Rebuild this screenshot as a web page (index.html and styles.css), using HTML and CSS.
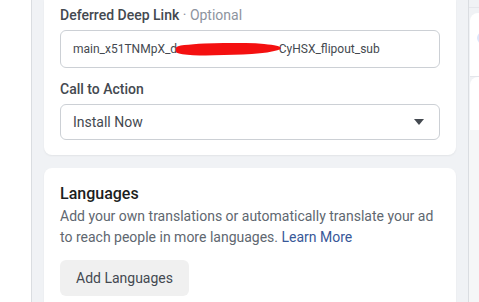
FILE: index.html
```html
<!DOCTYPE html>
<html lang="en">
<head>
<meta charset="UTF-8" />
<meta name="viewport" content="width=device-width, initial-scale=1" />
<title>Ad setup</title>
<link rel="stylesheet" href="styles.css">
</head>
<body>

<div class="page">
  <div class="left-nav"></div>

  <div class="main">
    <div class="card card-cut">
      <label class="field-label">Deferred Deep Link <span class="optional">· Optional</span></label>
      <div class="text-input">
        main_x51TNMpX_d<span class="redact">xxxxxxxxxxxxxxxx</span>CyHSX_flipout_sub
      </div>

      <label class="field-label field-gap">Call to Action</label>
      <div class="select">
        <span>Install Now</span>
        <span class="caret"></span>
      </div>
    </div>

    <div class="card">
      <h2>Languages</h2>
      <p class="desc">Add your own translations or automatically translate your ad to reach people in more languages. <a href="#">Learn More</a></p>
      <button class="btn">Add Languages</button>
    </div>
  </div>

  <div class="side">
    <div class="side-top"></div>
    <div class="side-card">
      <span class="dot"></span>
    </div>
    <div class="side-card side-card-2"></div>
    <div class="side-rest"></div>
  </div>
</div>

</body>
</html>
```

FILE: styles.css
```css
  body {
    margin: 0;
    padding: 0;
    overflow: hidden;
    background-color: #fff;
    font-family: Roboto, "Liberation Sans", Arial, sans-serif;
    color: #1c1e21;
  }
  .page {
    display: flex;
    height: 302px;
  }
  .left-nav {
    width: 31px;
    flex: none;
    background-color: #fff;
    border-right: 1px solid #dadde1;
  }
  .main {
    width: 412px;
    flex: none;
    background-color: #f0f2f5;
    padding: 0 12px;
    display: flex;
    flex-direction: column;
    gap: 13px;
  }
  .card {
    background-color: #fff;
    border-radius: 8px;
    padding: 16px 16px 16px 16px;
    box-shadow: 0 1px 2px rgba(0,0,0,0.06);
  }
  .card-cut {
    border-radius: 0 0 8px 8px;
    padding-top: 6px;
    padding-bottom: 15px;
  }
  .field-label {
    display: block;
    font-size: 14px;
    line-height: 18px;
    font-weight: 500;
    color: #444950;
    margin-bottom: 6px;
  }
  .field-gap {
    margin-top: 12px;
  }
  .optional {
    font-weight: 400;
    color: #8d949e;
  }
  .text-input {
    height: 38px;
    box-sizing: border-box;
    border: 1px solid #ccd0d5;
    border-radius: 6px;
    padding: 0 12px;
    display: flex;
    align-items: center;
    font-size: 12px;
    color: #444950;
    white-space: nowrap;
  }
  .redact {
    position: relative;
    color: transparent;
    letter-spacing: 0.4px;
  }
  .redact::after {
    content: '';
    position: absolute;
    left: -1px;
    right: -2px;
    top: 1px;
    height: 12px;
    background: #f41010;
    border-radius: 30% 60% 50% 40%;
    transform: rotate(-1.5deg);
  }
  .select {
    height: 36px;
    box-sizing: border-box;
    border: 1px solid #ccd0d5;
    border-radius: 6px;
    padding: 0 15px 0 12px;
    display: flex;
    align-items: center;
    justify-content: space-between;
    font-size: 14px;
    color: #444950;
  }
  .caret {
    width: 0;
    height: 0;
    border-left: 5px solid transparent;
    border-right: 5px solid transparent;
    border-top: 6px solid #444950;
  }
  .card h2 {
    margin: 0 0 2px 0;
    font-size: 16px;
    line-height: 20px;
    font-weight: 500;
    color: #1c1e21;
  }
  .desc {
    margin: 0 0 12px 0;
    font-size: 14px;
    line-height: 21px;
    color: #606770;
  }
  .desc a {
    color: #385898;
    text-decoration: none;
  }
  .btn {
    background-color: #f0f0f0;
    border: none;
    border-radius: 6px;
    height: 36px;
    padding: 0 16px;
    font-family: inherit;
    font-size: 14px;
    color: #444950;
    cursor: pointer;
  }
  .side {
    flex: 1;
    background-color: #f0f2f5;
    border-left: 1px solid #dadde1;
    display: flex;
    flex-direction: column;
  }
  .side-top {
    height: 7px;
    border-bottom: 1px solid #e4e6eb;
    margin-bottom: 5px;
  }
  .side-card {
    background-color: #fff;
    border-radius: 8px 0 0 0;
    margin-left: 1px;
    height: 64px;
    padding-top: 19px;
    box-sizing: border-box;
    border-bottom: 1px solid #e4e6eb;
  }
  .side-card-2 {
    height: 53px;
    padding: 0;
    border-bottom: none;
  }
  .dot {
    display: block;
    margin-left: 7px;
    width: 12px;
    height: 12px;
    border-radius: 50%;
    background-color: #dbe6fb;
  }
  .side-rest {
    flex: 1;
    background-color: #f5f6f7;
  }
```
